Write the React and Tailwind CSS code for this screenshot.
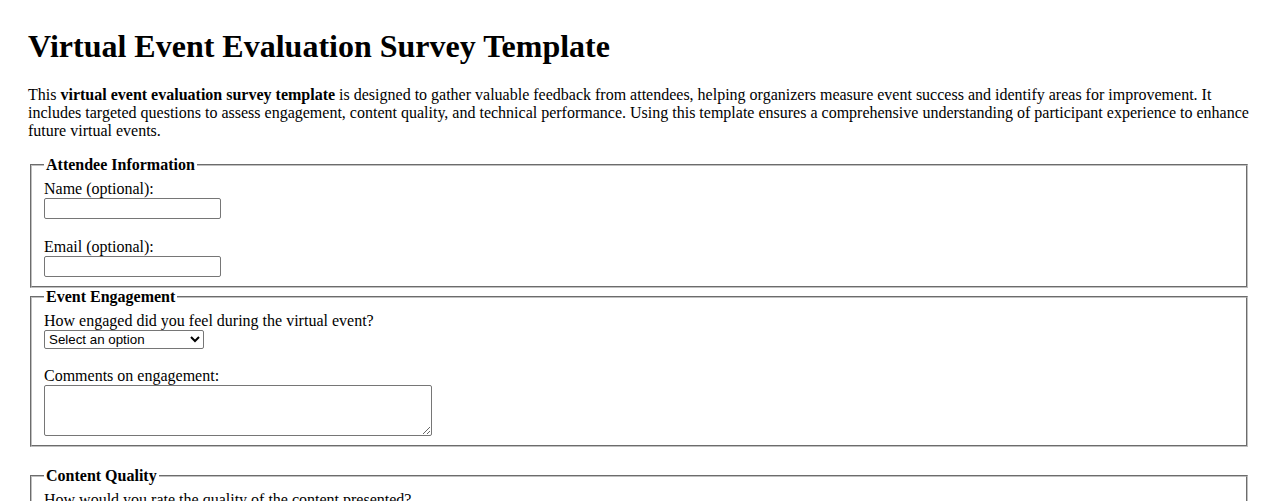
import React from "react";

const Fieldset = ({ legend, children, className = "" }) => (
  <fieldset
    className={`mx-[2px] px-[12px] pt-[6px] pb-[9px] border-2 [border-style:groove] border-[#c0c0c0] ${className}`}
  >
    <legend className="px-[2px] font-bold">{legend}</legend>
    {children}
  </fieldset>
);

const TextField = ({ label }) => (
  <>
    <label className="block h-[18px]">{label}</label>
    <input
      type="text"
      className="block w-[177px] h-[21px] border border-[#767676] rounded-[2px] bg-white px-[2px] text-[13.33px] font-['Liberation_Sans',sans-serif]"
    />
  </>
);

const SelectField = ({ label }) => (
  <>
    <label className="block h-[18px]">{label}</label>
    <select className="block w-[160px] h-[19px] border border-[#767676] rounded-[2px] bg-white text-black text-[13.33px] font-['Liberation_Sans',sans-serif]">
      <option>Select an option</option>
      <option>Very engaged</option>
      <option>Somewhat engaged</option>
      <option>Not engaged</option>
    </select>
  </>
);

const AreaField = ({ label }) => (
  <>
    <label className="block h-[18px]">{label}</label>
    <textarea className="block w-[388px] h-[51px] border border-[#767676] rounded-[2px] bg-white px-[2px] text-[13.33px] font-['Liberation_Mono',monospace]" />
  </>
);

export default function App() {
  return (
    <div className="min-h-screen bg-white text-black px-[28px] pt-[28px] pb-[28px] font-['Liberation_Serif',serif] text-[16px] leading-[normal]">
      <h1 className="text-[32px] font-bold mb-[21.44px]">
        Virtual Event Evaluation Survey Template
      </h1>
      <p className="mb-[16px]">
        This <strong>virtual event evaluation survey template</strong> is designed to gather
        valuable feedback from attendees, helping organizers measure event success and
        identify areas for improvement. It includes targeted questions to assess engagement,
        content quality, and technical performance. Using this template ensures a
        comprehensive understanding of participant experience to enhance future virtual events.
      </p>

      <form>
        <Fieldset legend="Attendee Information">
          <TextField label="Name (optional):" />
          <div className="h-[19px]" />
          <TextField label="Email (optional):" />
        </Fieldset>

        <Fieldset legend="Event Engagement">
          <SelectField label="How engaged did you feel during the virtual event?" />
          <div className="h-[18px]" />
          <AreaField label="Comments on engagement:" />
        </Fieldset>

        <div className="h-[20px]" />

        <Fieldset legend="Content Quality">
          <SelectField label="How would you rate the quality of the content presented?" />
          <div className="h-[18px]" />
          <AreaField label="Comments on content quality:" />
        </Fieldset>

        <Fieldset legend="Technical Performance">
          <SelectField label="Did you experience any technical issues?" />
          <div className="h-[18px]" />
          <AreaField label="Please describe any technical issues:" />
        </Fieldset>
      </form>
    </div>
  );
}
